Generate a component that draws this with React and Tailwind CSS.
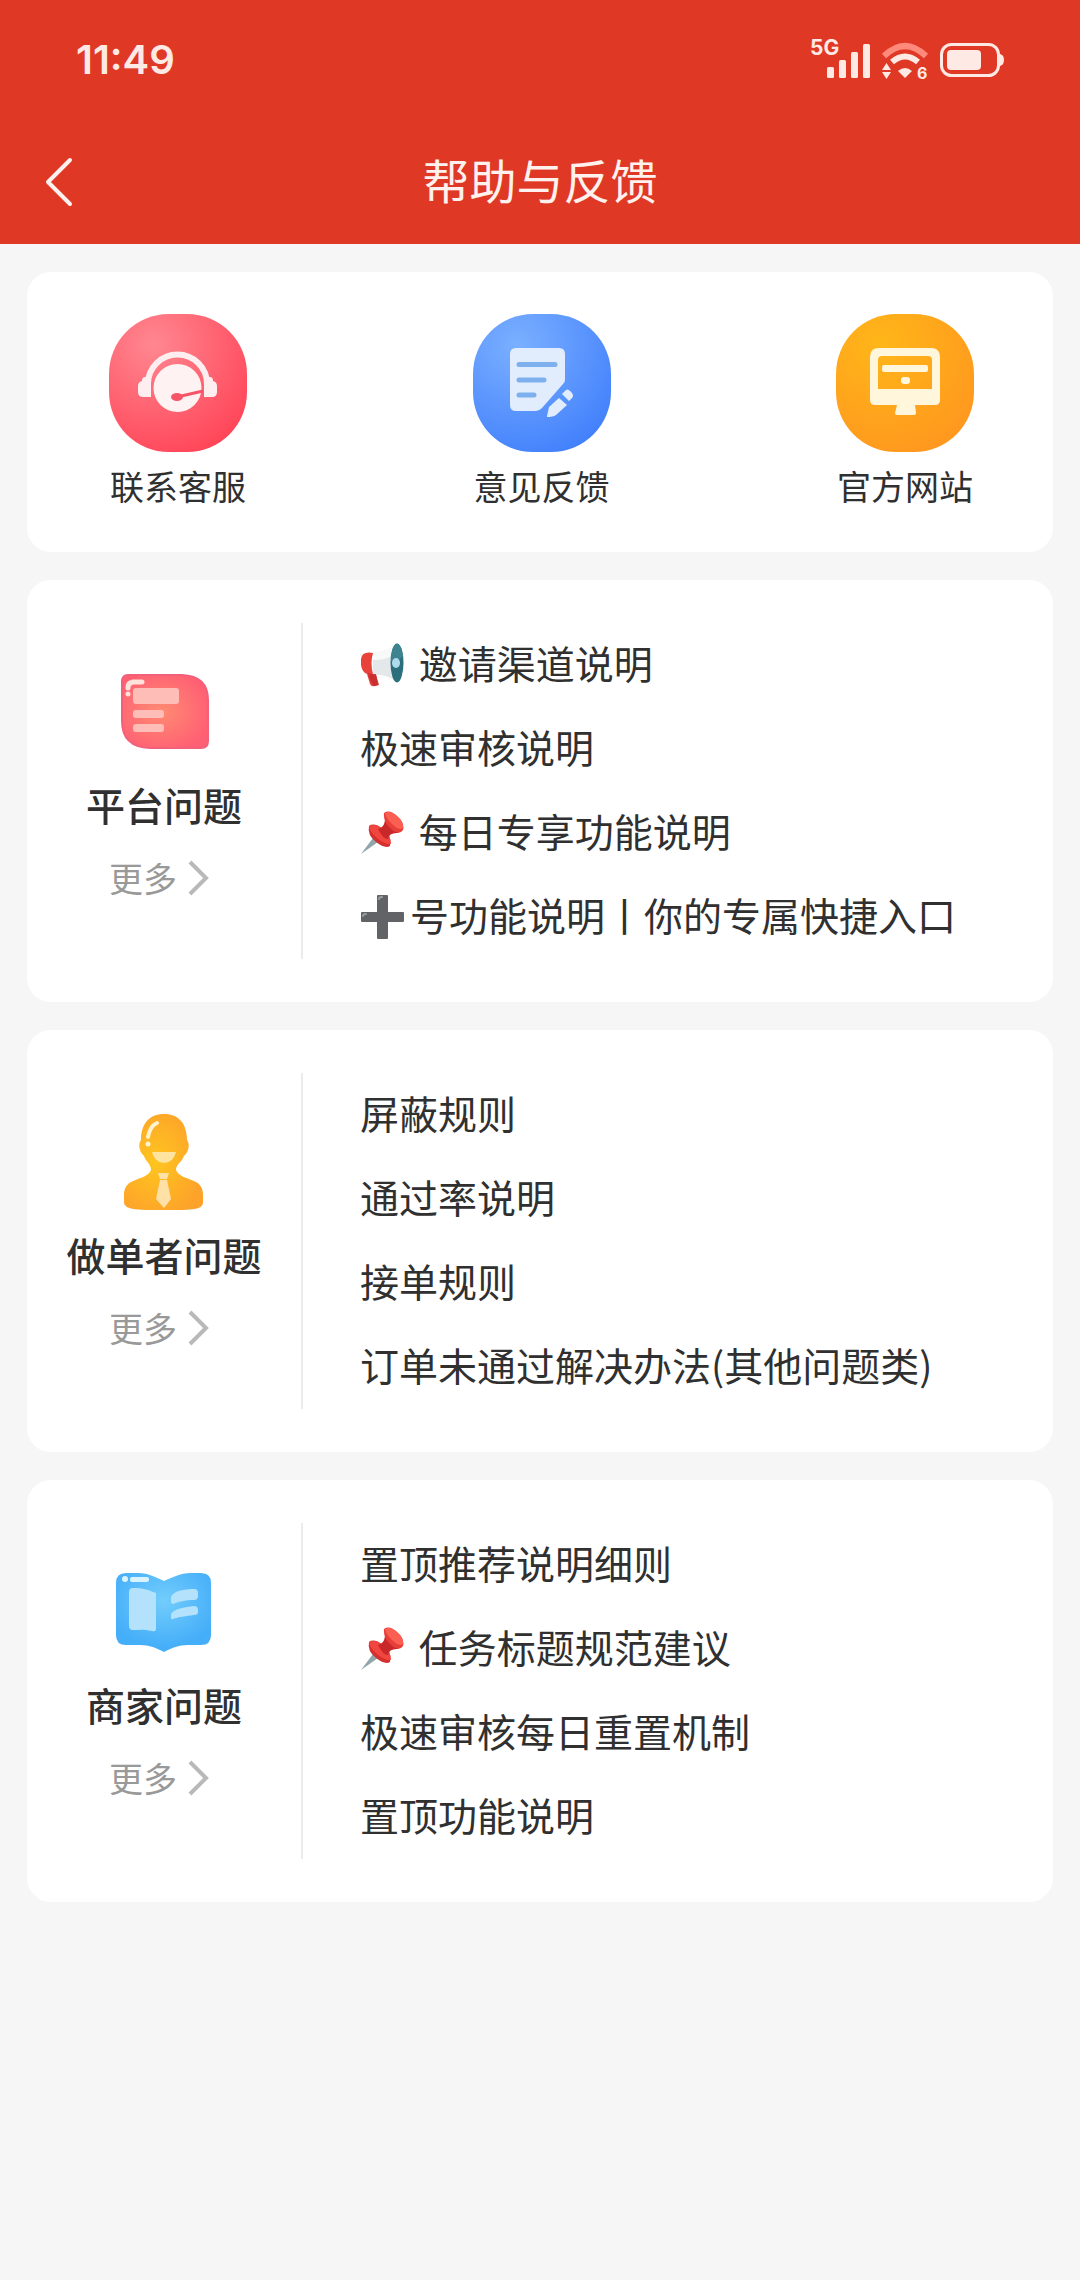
const shortcuts = [
  { label: "联系客服", icon: ServiceIcon },
  { label: "意见反馈", icon: FeedbackIcon },
  { label: "官方网站", icon: WebsiteIcon }
];

const sections = [
  {
    title: "平台问题",
    icon: PlatformIcon,
    items: [
      { emoji: MegaphoneEmoji, text: " 邀请渠道说明" },
      { text: "极速审核说明" },
      { emoji: PinEmoji, text: " 每日专享功能说明" },
      { emoji: PlusEmoji, text: "号功能说明丨你的专属快捷入口" }
    ]
  },
  {
    title: "做单者问题",
    icon: WorkerIcon,
    items: [
      { text: "屏蔽规则" },
      { text: "通过率说明" },
      { text: "接单规则" },
      { text: "订单未通过解决办法(其他问题类)" }
    ]
  },
  {
    title: "商家问题",
    icon: MerchantIcon,
    items: [
      { text: "置顶推荐说明细则" },
      { emoji: PinEmoji, text: " 任务标题规范建议" },
      { text: "极速审核每日重置机制" },
      { text: "置顶功能说明" }
    ]
  }
];

function Disc({ id, from, to, children }) {
  return (
    <svg className="size-[138px]" viewBox="0 0 138 138" aria-hidden="true">
      <defs>
        <radialGradient id={id} cx="0.32" cy="0.22" r="0.85">
          <stop offset="0" stopColor={from} />
          <stop offset="1" stopColor={to} />
        </radialGradient>
      </defs>
      <rect width="138" height="138" rx="60" fill={`url(#${id})`} />
      {children}
    </svg>
  );
}

function ServiceIcon() {
  return (
    <Disc id="service" from="#ff8790" to="#ff4659">
      <path d="M39 70a29.500 29.500 0 0 1 59 0" fill="none" stroke="#ffeeef" strokeWidth="6" />
      <path d="M42 63h-6q-3 0-3 4q-4 1-4 5v6q0 5 5 5h8zM95 63h6q3 0 3 4q4 1 4 5v6q0 5-5 5h-8z" fill="#ffeeef" />
      <circle cx="68.500" cy="74" r="24" fill="#fff2f3" />
      <path d="M68 83L94 77" stroke="#f65568" strokeWidth="3" />
      <ellipse cx="68" cy="83" rx="6" ry="4" fill="#f65568" />
    </Disc>
  );
}

function FeedbackIcon() {
  return (
    <Disc id="feedback" from="#7ab0ff" to="#4381fc">
      <path d="M43 34h43q6 0 6 6v26q0 2-2 4L69 94q-3 3-6 3H43q-6 0-6-6V40q0-6 6-6z" fill="#e1edfd" />
      <path d="M46 50.500h36M46 66h25M46 81h15" stroke="#7fb0ee" strokeWidth="5" strokeLinecap="round" />
      <path d="M74 102l2-9l10-9l8 7l-11 10q-3 2-9 2z" fill="#e1edfd" />
      <path d="M89 80l4-4q2-2 6 3q2 3 0 5l-3 3z" fill="#e1edfd" />
    </Disc>
  );
}

function WebsiteIcon() {
  return (
    <Disc id="website" from="#ffb618" to="#ff981f">
      <path
        d="M43 34h52q9 0 9 9v43q0 5-5 5H79l1 8q0 2-2 2H61q-2 0-2-2l2-8H39q-5 0-5-5V43q0-9 9-9zM46 42q-4 0-4 4v29h54V46q0-4-4-4z"
        fill="#fff6dc"
        fillRule="evenodd"
      />
      <rect x="46" y="51" width="46" height="7" rx="2" fill="#fff6dc" />
      <rect x="65" y="63" width="9" height="7" rx="3" fill="#fff6dc" />
    </Disc>
  );
}

function PlatformIcon() {
  return (
    <svg className="size-24" viewBox="0 0 96 96" aria-hidden="true">
      <defs>
        <radialGradient id="platform" cx="0.45" cy="0.5" r="0.6">
          <stop offset="0" stopColor="#ff8b73" />
          <stop offset="1" stopColor="#ff5f73" />
        </radialGradient>
      </defs>
      <path d="M12 11h54q26 1 26 25v41q0 7-7 7H34Q6 83 6 57V18q0-7 6-7z" fill="url(#platform)" stroke="#f2607a" strokeWidth="2" />
      <path d="M12 24v-1q0-4 5-5h9" fill="none" stroke="#ffe2db" strokeWidth="5" strokeLinecap="round" />
      <circle cx="12" cy="30" r="2.500" fill="#ffe2db" />
      <rect x="17" y="24" width="46" height="16" rx="3" fill="#ffbdb8" />
      <rect x="17" y="46" width="31" height="8" rx="3" fill="#ffbdb8" />
      <rect x="17" y="60" width="31" height="8" rx="3" fill="#ffbdb8" />
    </svg>
  );
}

function WorkerIcon() {
  return (
    <svg className="size-24" viewBox="0 0 96 96" aria-hidden="true">
      <defs>
        <radialGradient id="worker" cx="0.4" cy="0.5" r="0.6">
          <stop offset="0" stopColor="#ffc51f" />
          <stop offset="1" stopColor="#fda32a" />
        </radialGradient>
      </defs>
      <path
        d="M48 0C33 0 25 10 25 26C22 30 23 38 28 42C30 48 35 50 35 56C33 62 24 64 17 67C10 70 8 75 8 81V88C8 92 12 94 17 95C35 97 61 97 79 95C84 94 87 92 87 88V81C87 75 85 70 78 67C71 64 62 62 60 56C60 50 66 48 68 42C73 38 74 30 71 26C71 10 63 0 48 0z"
        fill="url(#worker)"
      />
      <path d="M32 23q2-11 9-14" fill="none" stroke="#fff3cf" strokeWidth="4" strokeLinecap="round" />
      <circle cx="32" cy="30" r="2.500" fill="#fff3cf" />
      <path d="M36 38h24q-3 11-12 11t-12-11z" fill="#ffe4a0" />
      <path d="M42 59h11l-2 6h-7zM44 66h7l4 19l-7 9l-8-9z" fill="#ffe0a6" />
    </svg>
  );
}

function MerchantIcon() {
  return (
    <svg className="size-24" viewBox="0 0 96 96" aria-hidden="true">
      <defs>
        <radialGradient id="merchant" cx="0.5" cy="0.35" r="0.6">
          <stop offset="0" stopColor="#72cdfb" />
          <stop offset="1" stopColor="#45aef9" />
        </radialGradient>
      </defs>
      <path
        d="M10 9H22C33 9 41 14 48 17C55 14 64 9 75 9H85Q95 9 95 19V71Q95 81 85 81H72C62 81 56 84 48 88C40 84 34 81 24 81H10Q0 81 0 71V19Q0 9 10 9z"
        fill="url(#merchant)"
      />
      <circle cx="9" cy="15" r="3" fill="#d9f3ff" />
      <rect x="14" y="13" width="19" height="5" rx="2" fill="#d9f3ff" />
      <path d="M13 28Q13 24 17 24C28 24 32 26 40 29V65Q40 68 36 67C28 65 22 66 16 66Q13 65 13 62z" fill="#b4e2fd" />
      <path d="M55 33C57 27 68 25 78 25Q82 25 82 29V32Q82 36 78 36C70 36 62 38 57 40Q55 40 55 37z" fill="#b4e2fd" />
      <path d="M55 50C58 45 68 43 78 42Q82 42 82 46V48Q82 51 78 51C70 52 62 53 57 55Q55 56 55 53z" fill="#b4e2fd" />
    </svg>
  );
}

function MegaphoneEmoji() {
  return (
    <svg className="h-11 w-[50px] shrink-0" viewBox="0 0 50 44" aria-hidden="true">
      <path d="M13 10C21 9 29 7 37 1V39C29 33 21 31 13 32z" fill="#e4e8ea" />
      <path d="M13 10C21 9 29 7 37 1V11C27 16 20 17 13 17z" fill="#f8fafa" />
      <path d="M13 10Q2 8 1 16V22Q2 29 7 31L10 41Q11 44 15 43L19 42Q18 38 16 32L13 31Q10 20 13 10z" fill="#e8433b" />
      <path d="M8 30q4 2 8 1l2 11l-4 1q-4-4-6-13z" fill="#c92f31" />
      <ellipse cx="37" cy="20" rx="6.500" ry="19.500" fill="#2b6f7d" />
      <path d="M37 1q5 1 6 12l-5 5h-7q0-15 6-17z" fill="#3d8390" />
      <ellipse cx="36" cy="20" rx="4" ry="5" fill="#aedbe9" />
    </svg>
  );
}

function PinEmoji() {
  return (
    <svg className="h-11 w-[50px] shrink-0" viewBox="0 0 50 44" aria-hidden="true">
      <path d="M13 27L1 43L18 31z" fill="#8fa6ab" />
      <path d="M9 15Q14 11 23 18T30 35Q25 38 16 31T9 15z" fill="#d3302f" />
      <path d="M9 15Q15 12 23 18T31 33Q25 34 17 27T9 15z" fill="#f0463f" />
      <path d="M18 18Q24 17 25 9L39 22Q29 21 28 28Q23 28 18 18z" fill="#c9282b" />
      <path d="M24 2Q29-2 37 5T43 19Q39 25 31 18T24 2z" fill="#e83e39" />
      <path d="M25 2Q30-1 37 5T43 17Q39 20 32 13T25 2z" fill="#fa5f52" />
    </svg>
  );
}

function PlusEmoji() {
  return (
    <svg className="h-11 w-[50px] shrink-0" viewBox="0 0 50 44" aria-hidden="true">
      <path d="M18 0h9q1 0 1 1v16h15q1 0 1 1v8q0 1-1 1H28v16q0 1-1 1h-9q-1 0-1-1V27H2q-1 0-1-1v-8q0-1 1-1h15V1q0-1 1-1z" fill="#626367" />
      <path d="M19 4q0-2 3-2M3 21q0-2 3-2" stroke="#9c9da0" strokeWidth="2" strokeLinecap="round" fill="none" />
    </svg>
  );
}

function StatusBar() {
  return (
    <div className="flex h-[120px] items-center justify-between px-[76px] font-['Inter',sans-serif] text-[#ffe9e4]">
      <span className="text-[40px] leading-[48px] font-semibold">11:49</span>
      <div className="flex items-center gap-[11px]">
        <svg className="h-14 w-[60px]" viewBox="0 -8 60 56" role="img" aria-label="5G">
          <text x="0" y="15" fontSize="21" fontWeight="700" fill="currentColor">5G</text>
          <rect x="17" y="27" width="7" height="11" rx="1.500" fill="currentColor" />
          <rect x="29" y="20" width="7" height="18" rx="1.500" fill="currentColor" />
          <rect x="41" y="12" width="7" height="26" rx="1.500" fill="currentColor" />
          <rect x="53" y="4" width="7" height="34" rx="1.500" fill="currentColor" />
        </svg>
        <svg className="h-14 w-12" viewBox="0 -8 48 56" role="img" aria-label="Wi-Fi 6">
          <path d="M3 16Q24-4 45 16" fill="none" stroke="#ff8a7b" strokeWidth="6" />
          <path d="M11 22Q24 11 37 22" fill="none" stroke="currentColor" strokeWidth="6" />
          <path d="M17 31q7-6 14 0l-7 7z" fill="currentColor" />
          <path d="M1 30l4.500-7l4.500 7zM1 32h9l-4.500 7z" fill="currentColor" />
          <text x="36" y="39" fontSize="16" fontWeight="700" fill="currentColor">6</text>
        </svg>
        <svg className="h-14 w-16" viewBox="0 -8 64 56" role="img" aria-label="电量">
          <rect x="1.500" y="4.500" width="57" height="31" rx="10" fill="none" stroke="currentColor" strokeWidth="3" />
          <rect x="7" y="10" width="34" height="20" rx="4" fill="currentColor" />
          <path d="M60 14q4 1 4 6t-4 6z" fill="currentColor" />
        </svg>
      </div>
    </div>
  );
}

function SectionCard({ section }) {
  const Icon = section.icon;
  return (
    <section className="flex rounded-3xl bg-white py-[43px]">
      <div className="flex w-[276px] shrink-0 flex-col items-center border-r-2 border-[#ebebeb] pt-[41px]">
        <Icon />
        <h2 className="mt-4 text-[39px] leading-[56px] font-medium">{section.title}</h2>
        <button type="button" className="mt-[22px] flex items-center gap-2.5 text-[34px] leading-[48px] text-[#999]">
          更多
          <svg className="h-9 w-8" viewBox="0 0 32 36" fill="none" stroke="#b9b9b9" strokeWidth="4" aria-hidden="true">
            <path d="M3 2l16 16L3 34" />
          </svg>
        </button>
      </div>
      <ul className="min-w-0 flex-1 pl-[57px]">
        {section.items.map((item) => {
          const Emoji = item.emoji;
          return (
            <li key={item.text}>
              <a href="#" className="flex h-[84px] items-center text-[39px] leading-[56px] whitespace-pre">
                {Emoji && <Emoji />}
                <span className="pb-1.5">{item.text}</span>
              </a>
            </li>
          );
        })}
      </ul>
    </section>
  );
}

export default function App() {
  return (
    <div className="min-h-screen bg-[#f6f6f6] font-['Noto_Sans_CJK_SC',sans-serif] text-[#303030]">
      <header className="bg-[#df3926] text-[#fff1ed]">
        <StatusBar />
        <div className="grid h-[124px] grid-cols-[1fr_auto_1fr] items-center px-[42px]">
          <button type="button" aria-label="返回" className="justify-self-start">
            <svg className="h-[52px] w-8" viewBox="0 0 32 52" fill="none" stroke="currentColor" strokeWidth="4" strokeLinecap="round" strokeLinejoin="round">
              <path d="M28 4L6 26L28 48" />
            </svg>
          </button>
          <h1 className="pb-1.5 text-[47px] leading-[64px]">帮助与反馈</h1>
        </div>
      </header>

      <main className="flex flex-col gap-7 px-[27px] py-7">
        <nav className="flex h-[280px] items-start justify-between rounded-3xl bg-white pt-[42px] pr-[79px] pl-[82px]">
          {shortcuts.map(({ label, icon: Icon }) => (
            <a key={label} href="#" className="flex flex-col items-center gap-2.5 text-[34px] leading-[48px]">
              <Icon />
              {label}
            </a>
          ))}
        </nav>
        {sections.map((section) => (
          <SectionCard key={section.title} section={section} />
        ))}
      </main>
    </div>
  );
}
